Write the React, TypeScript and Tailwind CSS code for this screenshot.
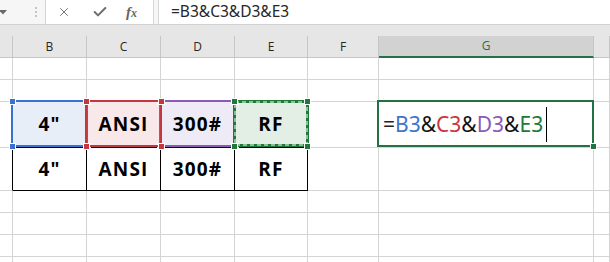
import { X, Check } from 'lucide-react';

const COLS = ['A', 'B', 'C', 'D', 'E', 'F', 'G', 'H'];

// row heights measured off the sheet (px, border included)
const ROWS = [22, 22, 46, 43, 22, 22, 22, 22];

const VALUES = ['4"', 'ANSI', '300#', 'RF'];

function Handle({ x, y, color }: { x: number; y: number; color: string }) {
  return (
    <div
      className="absolute w-[5px] h-[5px] outline outline-1 outline-white"
      style={{ left: x - 2, top: y - 2, background: color }}
    />
  );
}

function RangeBox({ x, y, w, h, color }: { x: number; y: number; w: number; h: number; color: string }) {
  return (
    <>
      <div className="absolute border-2" style={{ left: x, top: y, width: w, height: h, borderColor: color }} />
      <Handle x={x + 1} y={y + 1} color={color} />
      <Handle x={x + w - 1} y={y + 1} color={color} />
      <Handle x={x + 1} y={y + h - 1} color={color} />
      <Handle x={x + w - 1} y={y + h - 1} color={color} />
    </>
  );
}

export default function App() {
  return (
    <div className="relative w-[610px] h-[262px] overflow-hidden bg-white font-['Open_Sans','Noto_Sans',sans-serif] text-[#222]">
      {/* Formula bar */}
      <div className="flex h-[25px] bg-[#f6f6f6] border-b border-[#d2d2d2]">
        <div className="w-[26px] flex items-center">
          <svg width="8" height="5" viewBox="0 0 8 5" className="-ml-[1px]">
            <path d="M0 0 H8 L4 4.5 Z" fill="#6a6a6a" />
          </svg>
        </div>
        <div className="w-[19px] flex flex-col items-center justify-center gap-[2px]">
          <span className="w-[2px] h-[2px] bg-[#c4c4c4]" />
          <span className="w-[2px] h-[2px] bg-[#c4c4c4]" />
          <span className="w-[2px] h-[2px] bg-[#c4c4c4]" />
        </div>
        <div className="w-[109px] bg-white border-x border-[#d6d6d6] flex items-center">
          <X className="ml-[11px] w-[14px] h-[14px] text-[#6e6e6e]" strokeWidth={1.6} />
          <Check className="ml-[21px] w-[16px] h-[16px] text-[#6e6e6e]" strokeWidth={3} />
          <span className="ml-[18px] font-['Liberation_Serif',serif] italic font-bold text-[15px] text-[#666] leading-none">
            f<span className="text-[12px]">x</span>
          </span>
        </div>
        <div className="flex-1 ml-[4px] bg-white border-l border-[#d6d6d6] flex items-center pl-[12px] text-[15.5px] leading-none font-['Noto_Sans',sans-serif] text-[#262626]">
          =B3&amp;C3&amp;D3&amp;E3
        </div>
      </div>

      {/* Column headers */}
      <div className="h-[11px] bg-[#e6e6e6]" />
      <div className="grid grid-cols-[13px_74px_74px_74px_73px_71px_215px_16px] h-[22px] bg-[#e6e6e6]">
        {COLS.map((c, i) => (
          <div
            key={c}
            className={
              c === 'G'
                ? 'flex items-center justify-center text-[12px] text-[#217346] bg-[#d2d2d2] border-b-2 border-[#217346] border-r border-r-[#c6c6c6]'
                : 'flex items-center justify-center text-[12px] text-[#262626] border-b border-[#c6c6c6] border-r border-r-[#c6c6c6]'
            }
          >
            {i === 0 || c === 'H' ? '' : c}
          </div>
        ))}
      </div>

      {/* Sheet body */}
      <div className="grid grid-cols-[13px_74px_74px_74px_73px_71px_215px_16px]">
        {ROWS.map((h, r) =>
          COLS.map((c, ci) => {
            const row = r + 1;
            const inTable = (row === 3 || row === 4) && ci >= 1 && ci <= 4;
            const fill =
              row === 3
                ? ['', 'bg-[#e8eef8]', 'bg-[#f8e8e9]', 'bg-[#efebf6]', 'bg-[#e3efe5]'][ci] || ''
                : '';
            const border =
              row === 4 && ci >= 1 && ci <= 4
                ? 'border-r border-b border-black'
                : (row === 3 || row === 4) && ci === 0
                  ? 'border-r border-b border-r-black border-b-[#d4d4d4]'
                  : row === 3 && inTable
                    ? 'border-r border-b border-black'
                    : 'border-r border-b border-[#d4d4d4]';
            return (
              <div
                key={c + row}
                style={{ height: h }}
                className={`${border} ${fill} flex items-center justify-center overflow-visible whitespace-nowrap`}
              >
                {inTable && (
                  <span className="text-[19px] font-bold tracking-[1.2px] text-black leading-none">{VALUES[ci - 1]}</span>
                )}
                {row === 3 && c === 'G' && (
                  <div className="w-full flex items-center pl-[4px] text-[21px] leading-none font-['Noto_Sans',sans-serif]">
                    <span className="text-[#222]">=</span>
                    <span className="text-[#3f74d0]">B3</span>
                    <span className="text-[#111]">&amp;</span>
                    <span className="text-[#c8373e]">C3</span>
                    <span className="text-[#111]">&amp;</span>
                    <span className="text-[#8b5ab8]">D3</span>
                    <span className="text-[#111]">&amp;</span>
                    <span className="text-[#1f7a3a]">E3</span>
                    <span className="ml-[3px] w-[1px] h-[35px] bg-black" />
                  </div>
                )}
              </div>
            );
          })
        )}
      </div>

      {/* Reference highlights over row 3 */}
      <RangeBox x={11} y={100} w={77} h={47} color="#3a70cf" />
      <RangeBox x={159} y={100} w={77} h={47} color="#8a5bb6" />
      <RangeBox x={85} y={100} w={77} h={47} color="#c4373f" />
      <div className="absolute left-[233px] top-[100px] w-[76px] h-[47px]">
        <svg width="76" height="47" className="absolute inset-0">
          <rect x="1.5" y="1.5" width="73" height="44" fill="none" stroke="#1f7a3a" strokeWidth="3" />
          <rect x="2" y="2" width="72" height="43" fill="none" stroke="#fff" strokeWidth="1" strokeDasharray="4 3" />
        </svg>
      </div>
      <Handle x={234} y={101} color="#1f7a3a" />
      <Handle x={307} y={101} color="#1f7a3a" />
      <Handle x={234} y={146} color="#1f7a3a" />
      <Handle x={307} y={146} color="#1f7a3a" />

      {/* Active cell G3 */}
      <div className="absolute left-[377px] top-[100px] w-[217px] h-[47px] border-2 border-[#217346]" />
      <div className="absolute left-[591px] top-[144px] w-[5px] h-[5px] bg-[#217346] outline outline-1 outline-white" />
    </div>
  );
}
